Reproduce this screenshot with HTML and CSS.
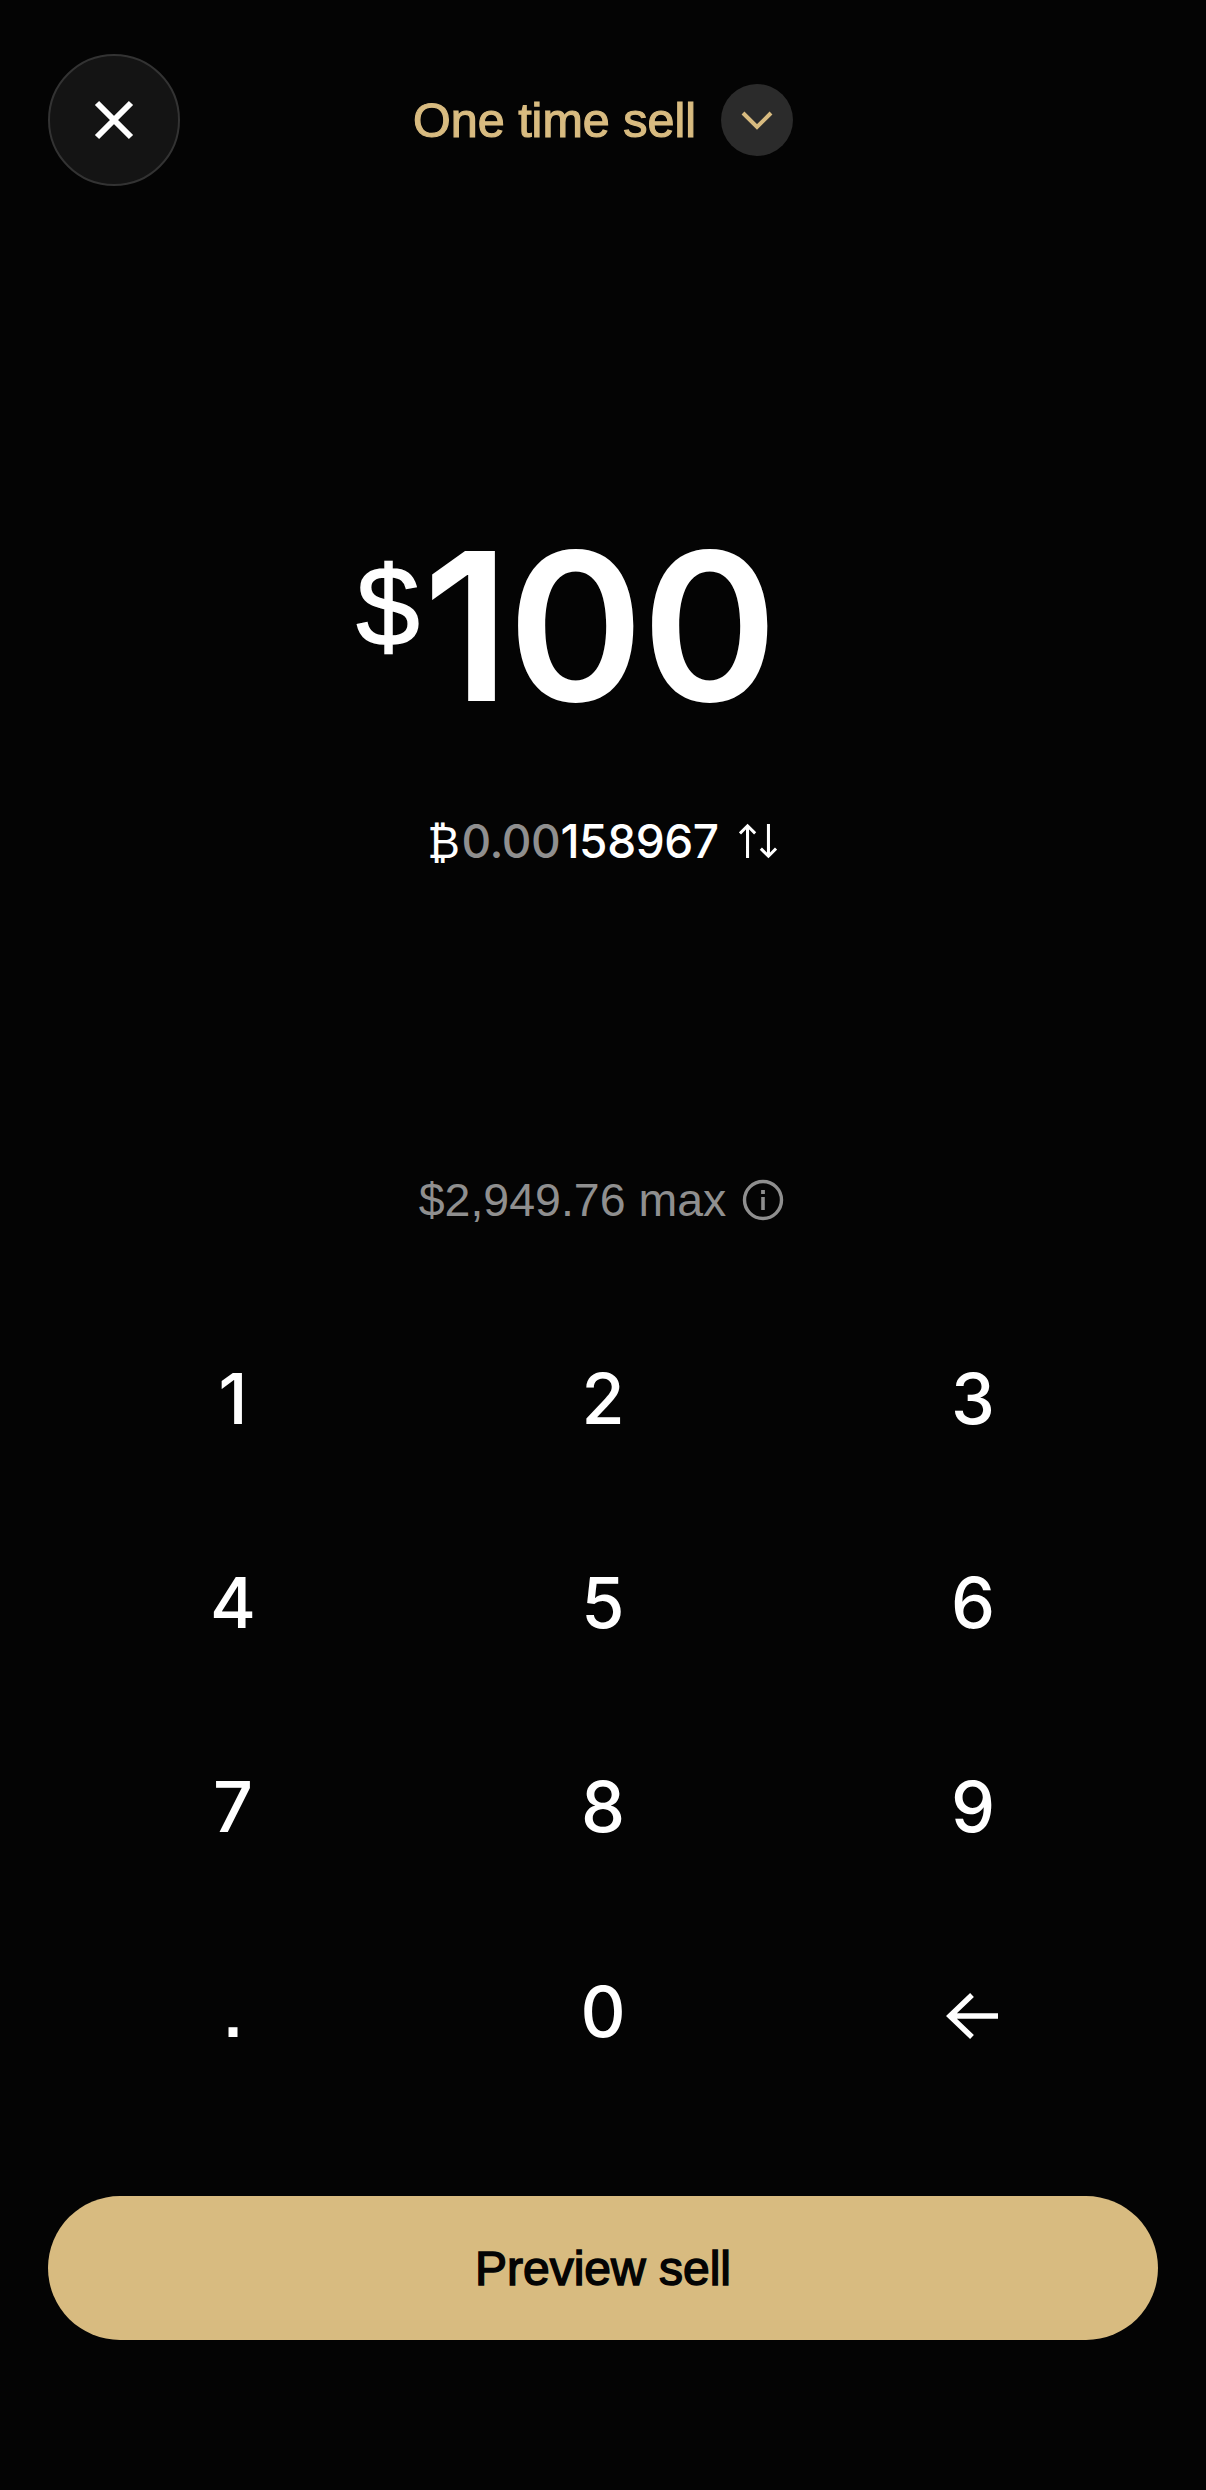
FILE: index.html
```html
<!DOCTYPE html>
<html lang="en">
<head>
  <meta charset="UTF-8" />
  <meta name="viewport" content="width=device-width, initial-scale=1.0"/>
  <title>One time sell</title>
  <link rel="stylesheet" href="styles.css">
</head>
<body>
  <div class="page">

    <div class="header">
      <button class="close-btn" aria-label="Close">
        <svg width="40" height="40" viewBox="0 0 40 40"><path d="M3 3 L37 37 M37 3 L3 37" stroke="#fff" stroke-width="6" fill="none"/></svg>
      </button>
      <div class="order-type">
        <span class="order-label">One time sell</span>
        <span class="chevron-btn">
          <svg width="34" height="20" viewBox="0 0 34 20"><path d="M3 3 L17 17 L31 3" stroke="#d8bb80" stroke-width="4" fill="none"/></svg>
        </span>
      </div>
    </div>

    <div class="amount">
      <span class="amount-currency">$</span>
      <span class="amount-value">100</span>
    </div>

    <div class="crypto-row">
      <span class="crypto-value"><span class="btc-sign">₿</span><span class="dim">0.00</span>158967</span>
      <svg width="38" height="36" viewBox="0 0 40 36"><path d="M9 36 V2 M1 10 L9 2 L17 10 M31 0 V34 M23 26 L31 34 L39 26" stroke="#fff" stroke-width="3.2" fill="none"/></svg>
    </div>

    <div class="max-row">
      <span>$2,949.76 max</span>
      <svg width="42" height="42" viewBox="0 0 42 42"><circle cx="21" cy="21" r="18.5" stroke="#8f8f8f" stroke-width="3.4" fill="none"/><path d="M21 18 V31" stroke="#8f8f8f" stroke-width="3.6"/><path d="M21 11 V15" stroke="#8f8f8f" stroke-width="3.8"/></svg>
    </div>

    <div class="keypad">
      <button class="key">1</button>
      <button class="key">2</button>
      <button class="key">3</button>
      <button class="key">4</button>
      <button class="key">5</button>
      <button class="key">6</button>
      <button class="key">7</button>
      <button class="key">8</button>
      <button class="key">9</button>
      <button class="key key-dot">.</button>
      <button class="key">0</button>
      <button class="key" aria-label="Delete">
        <svg class="back-icon" width="54" height="48" viewBox="0 0 54 48"><path d="M52 24 H5 M26 3 L4 24 L26 45" stroke="#fff" stroke-width="5.5" fill="none"/></svg>
      </button>
    </div>

    <button class="preview-btn">Preview sell</button>

  </div>
</body>
</html>
```

FILE: styles.css
```css
* { box-sizing: border-box; }
body {
  margin: 0;
  background: #040404;
  color: #fff;
  font-family: 'Liberation Sans', Arial, sans-serif;
}
button {
  font-family: inherit;
  border: none;
  background: none;
  color: inherit;
  padding: 0;
}
.page {
  height: 2490px;
  padding: 54px 48px 0;
}
.header {
  display: grid;
  grid-template-columns: 1fr auto 1fr;
  align-items: center;
}
.close-btn {
  width: 132px;
  height: 132px;
  border-radius: 50%;
  background: #141414;
  border: 2px solid #333;
  display: flex;
  align-items: center;
  justify-content: center;
}
.order-type {
  display: flex;
  align-items: center;
  gap: 25px;
}
.order-label {
  font-size: 48.5px;
  line-height: 54px;
  color: #d8bb80;
  -webkit-text-stroke: 1.2px #d8bb80;
}
.chevron-btn {
  width: 72px;
  height: 72px;
  border-radius: 50%;
  background: #2b2b2b;
  display: flex;
  align-items: center;
  justify-content: center;
}
.amount {
  margin-top: 346px;
  padding-right: 74px;
  display: flex;
  justify-content: center;
  align-items: flex-start;
  height: 188px;
}
.amount-currency {
  font-size: 114px;
  line-height: 150px;
  margin-right: 3px;
  -webkit-text-stroke: 1.5px #fff;
}
.amount-value {
  font-family: Inter, sans-serif;
  font-size: 206px;
  font-weight: 600;
  line-height: 188px;
  letter-spacing: -2px;
}
.crypto-row {
  margin-top: 93px;
  height: 56px;
  padding-right: 2px;
  display: flex;
  justify-content: center;
  align-items: center;
  gap: 20px;
  font-family: Inter, sans-serif;
  font-size: 46px;
  font-weight: 500;
  letter-spacing: -0.4px;
}
.btc-sign {
  font-family: 'DejaVu Sans', sans-serif;
  font-size: 44px;
  font-weight: 400;
  margin-right: 2px;
}
.dim { color: #8f8f8f; }
.max-row {
  margin-top: 303px;
  height: 56px;
  padding-right: 3px;
  display: flex;
  justify-content: center;
  align-items: center;
  gap: 16px;
  font-size: 46.5px;
  color: #8f8f8f;
}
.keypad {
  margin-top: 68px;
  display: grid;
  grid-template-columns: repeat(3, 1fr);
  grid-auto-rows: 204.3px;
}
.key {
  font-family: Inter, sans-serif;
  font-size: 70px;
  font-weight: 500;
  display: flex;
  align-items: center;
  justify-content: center;
}
.key-dot {
  font-family: 'Liberation Sans', sans-serif;
  font-size: 72px;
  -webkit-text-stroke: 2px #fff;
}
.back-icon { margin-top: 10px; }
.preview-btn {
  display: block;
  width: 100%;
  height: 144px;
  margin-top: 83px;
  border-radius: 72px;
  background: #d8bb80;
  color: #040404;
  font-size: 48px;
  -webkit-text-stroke: 1.5px #040404;
}
```
